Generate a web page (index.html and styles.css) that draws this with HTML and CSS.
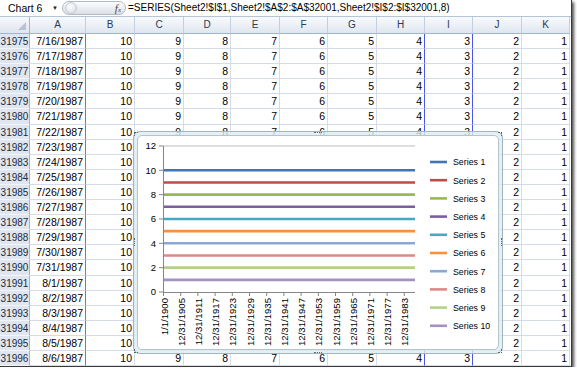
FILE: index.html
```html
<!DOCTYPE html>
<html>
<head>
  <meta charset="UTF-8">
  <title>Chart 6 - Series formula</title>
  <link rel="stylesheet" href="styles.css">
</head>
<body>
  <div class="window">
    <div class="formula-bar">
      <div class="name-box">Chart 6<span class="name-arrow">&#9660;</span></div>
      <div class="fx-pill"><span class="knob"></span><span class="fx">f<span class="fx-x">x</span></span></div>
      <div class="formula">=SERIES(Sheet2!$I$1,Sheet2!$A$2:$A$32001,Sheet2!$I$2:$I$32001,8)</div>
    </div>

    <div class="sheet">
      <div class="grid" id="grid">
        <div class="corner"></div>
        <div class="col-head">A</div>
        <div class="col-head">B</div>
        <div class="col-head">C</div>
        <div class="col-head">D</div>
        <div class="col-head">E</div>
        <div class="col-head">F</div>
        <div class="col-head">G</div>
        <div class="col-head">H</div>
        <div class="col-head">I</div>
        <div class="col-head">J</div>
        <div class="col-head">K</div>
      </div>

      <div class="chart">
        <span class="handle handle-tl"></span>
        <span class="handle handle-tm"></span>
        <span class="handle handle-tr"></span>
        <span class="handle handle-ml"></span>
        <span class="handle handle-mr"></span>
        <span class="handle handle-bl"></span>
        <span class="handle handle-bm"></span>
        <span class="handle handle-br"></span>
        <div class="chart-inner">
          <svg id="plot" class="plot" width="360" height="213" viewBox="0 0 360 213"></svg>
        </div>
      </div>
    </div>
  </div>

  <script src="script.js"></script>
</body>
</html>
```

FILE: styles.css
```css
body {
  margin: 0;
  background-color: #fff;
  font-family: "Liberation Sans", Arial, sans-serif;
  color: #000;
}
.window {
  width: 571px;
  height: 366px;
  overflow: hidden;
  background-color: #fff;
  border-right: 1px solid #3a3a3a;
  border-bottom: 1px solid #3a3a3a;
  box-shadow: 2px 2px 3px rgba(0, 0, 0, 0.7);
}

/* formula bar */
.formula-bar {
  height: 17px;
  display: flex;
  box-sizing: border-box;
  border-bottom: 1px solid #b6c4d6;
  background-color: #fff;
}
.name-box {
  width: 62px;
  display: flex;
  align-items: center;
  justify-content: space-between;
  padding: 0 4px 0 8px;
  box-sizing: border-box;
  font-size: 10.5px;
}
.name-arrow {
  font-size: 6px;
  color: #222;
}
.fx-pill {
  width: 64px;
  margin: 1px 0;
  display: flex;
  align-items: center;
  justify-content: space-between;
  padding: 0 4px 0 2px;
  box-sizing: border-box;
  border: 1px solid #b2bac5;
  border-radius: 8px;
  background: linear-gradient(#fbfcfd, #dce0e6);
}
.knob {
  width: 10px;
  height: 10px;
  border-radius: 50%;
  border: 1px solid #c6ccd5;
  background: radial-gradient(circle at 40% 35%, #fff, #d3d8e0);
}
.fx {
  font-family: "Liberation Serif", serif;
  font-style: italic;
  font-size: 11px;
  color: #4a4a4a;
}
.fx-x {
  font-size: 7px;
}
.formula {
  flex: 1;
  padding-left: 2px;
  font-size: 10px;
  line-height: 16px;
  white-space: nowrap;
}

/* worksheet */
.sheet {
  position: relative;
}
.grid {
  display: grid;
  grid-template-columns: 30px 56px 49px 49px 47px 49px 48px 49px 48px 48px 49px 48px;
  grid-template-rows: 17px repeat(22, 15.1px);
}
.corner {
  display: flex;
  justify-content: flex-end;
  align-items: flex-end;
  padding: 0 3px 3px 0;
  background: linear-gradient(#f6f8fb, #dfe5ee);
  border-right: 1px solid #9eb6ce;
  border-bottom: 1px solid #9eb6ce;
}
.corner::after {
  content: "";
  border-left: 8px solid transparent;
  border-bottom: 8px solid #b9c3d0;
}
.col-head {
  text-align: center;
  font-size: 10px;
  line-height: 16px;
  color: #2a3b52;
  background: linear-gradient(#f9fbfd, #dfe6ef);
  border-right: 1px solid #c3cfdd;
  border-bottom: 1px solid #9eb6ce;
}
.row-head {
  text-align: center;
  font-size: 10px;
  line-height: 15px;
  color: #1c2a3c;
  background-color: #dfe6f0;
  border-right: 1px solid #9eb6ce;
  border-bottom: 1px solid #f2f5fa;
}
.cell {
  text-align: right;
  padding-right: 2px;
  font-size: 10.5px;
  line-height: 15px;
  white-space: nowrap;
  overflow: hidden;
  border-right: 1px solid #d6dce7;
  border-bottom: 1px solid #d6dce7;
}
.edge-purple {
  border-right-color: #b84fd8;
}
.edge-blue {
  border-right-color: #4b55e6;
}

/* chart object */
.chart {
  position: absolute;
  left: 133px;
  top: 114px;
  width: 370px;
  height: 223px;
  box-sizing: border-box;
  padding: 3px;
  border: 1px solid #a3b5bd;
  border-radius: 7px;
  background-color: rgba(221, 236, 240, 0.8);
}
.chart-inner {
  height: 100%;
  box-sizing: border-box;
  border: 1px solid #b4c4cb;
  border-radius: 5px;
  background-color: #fff;
}
.plot {
  display: block;
  font-family: "Liberation Sans", Arial, sans-serif;
}
.handle {
  position: absolute;
  border: 0 dotted #55666d;
}
.handle-tm,
.handle-bm {
  left: 180px;
  width: 8px;
  border-top-width: 1px;
}
.handle-tm {
  top: 0;
}
.handle-bm {
  bottom: 0;
}
.handle-ml,
.handle-mr {
  top: 106px;
  height: 8px;
  border-left-width: 1px;
}
.handle-ml {
  left: 0;
}
.handle-mr {
  right: 0;
}
.handle-tl,
.handle-tr,
.handle-bl,
.handle-br {
  width: 3px;
  height: 3px;
}
.handle-tl {
  left: 0;
  top: 0;
  border-left-width: 1px;
  border-top-width: 1px;
}
.handle-tr {
  right: 0;
  top: 0;
  border-right-width: 1px;
  border-top-width: 1px;
}
.handle-bl {
  left: 0;
  bottom: 0;
  border-left-width: 1px;
  border-bottom-width: 1px;
}
.handle-br {
  right: 0;
  bottom: 0;
  border-right-width: 1px;
  border-bottom-width: 1px;
}
```

FILE: script.js
```js
// Worksheet rows: 22 visible rows, dates in A, 10..1 in B..K
const grid = document.getElementById('grid');
const firstDay = new Date(1987, 6, 16);

function addCell(className, text) {
  const div = document.createElement('div');
  div.className = className;
  div.textContent = text;
  grid.appendChild(div);
}

for (let i = 0; i < 22; i++) {
  const d = new Date(firstDay);
  d.setDate(firstDay.getDate() + i);
  addCell('row-head', 31975 + i);
  addCell('cell edge-purple', (d.getMonth() + 1) + '/' + d.getDate() + '/' + d.getFullYear());
  // rows 7..20 of columns C..I sit fully behind the chart object
  const hidden = i >= 7 && i <= 20;
  for (let v = 10; v >= 1; v--) {
    const covered = hidden && v <= 9 && v >= 3;
    // columns H and I carry the highlighted series range
    addCell(v === 4 || v === 3 ? 'cell edge-blue' : 'cell', covered ? '' : v);
  }
}

// Line chart
const svg = document.getElementById('plot');
const NS = 'http://www.w3.org/2000/svg';
const x0 = 25;
const x1 = 277;
const yZero = 156;
const unit = 12.17;
const colors = ['#4573b5', '#be4b48', '#97b853', '#7c5fa0', '#46a9c4',
  '#f59141', '#8ba7d4', '#db8a88', '#b6cf8b', '#a592bf'];

function el(name, attrs, text) {
  const node = document.createElementNS(NS, name);
  for (const key in attrs) node.setAttribute(key, attrs[key]);
  if (text !== undefined) node.textContent = text;
  svg.appendChild(node);
  return node;
}

function yOf(v) {
  return yZero - v * unit;
}

// gridlines, value axis labels and ticks
for (let v = 0; v <= 12; v += 2) {
  const y = yOf(v);
  if (v > 0) el('line', { x1: x0, x2: x1, y1: y, y2: y, stroke: '#bdbdbd', 'stroke-width': 1 });
  el('line', { x1: x0 - 4, x2: x0, y1: y, y2: y, stroke: '#868686', 'stroke-width': 1 });
  el('text', { x: 18, y: y + 3.4, 'font-size': 9.5, 'text-anchor': 'end', fill: '#000' }, v);
}
el('line', { x1: x0 + 0.5, x2: x0 + 0.5, y1: yOf(12), y2: yZero, stroke: '#868686', 'stroke-width': 1 });

// series lines
for (let n = 0; n < 10; n++) {
  const y = yOf(10 - n);
  el('line', { x1: x0 + 1, x2: x1, y1: y, y2: y, stroke: colors[n], 'stroke-width': 2.6 });
}

// category axis
el('line', { x1: x0, x2: x1, y1: yZero + 0.5, y2: yZero + 0.5, stroke: '#868686', 'stroke-width': 1 });
for (let i = 0; i < 15; i++) {
  const x = x0 + 0.5 + i * 17.2;
  el('line', { x1: x, x2: x, y1: yZero, y2: yZero + 4, stroke: '#868686', 'stroke-width': 1 });
  const label = i === 0 ? '1/1/1900' : '12/31/' + (1899 + i * 6);
  el('text', {
    transform: 'translate(' + (x + 4) + ',' + (yZero + 6) + ') rotate(-90)',
    'font-size': 9.6,
    'text-anchor': 'end',
    fill: '#000'
  }, label);
}

// legend
for (let n = 0; n < 10; n++) {
  const y = 26 + n * 18.2;
  el('line', { x1: 292, x2: 309, y1: y, y2: y, stroke: colors[n], 'stroke-width': 2.6 });
  el('text', { x: 315, y: y + 3.3, 'font-size': 8.8, fill: '#000' }, 'Series ' + (n + 1));
}
```
